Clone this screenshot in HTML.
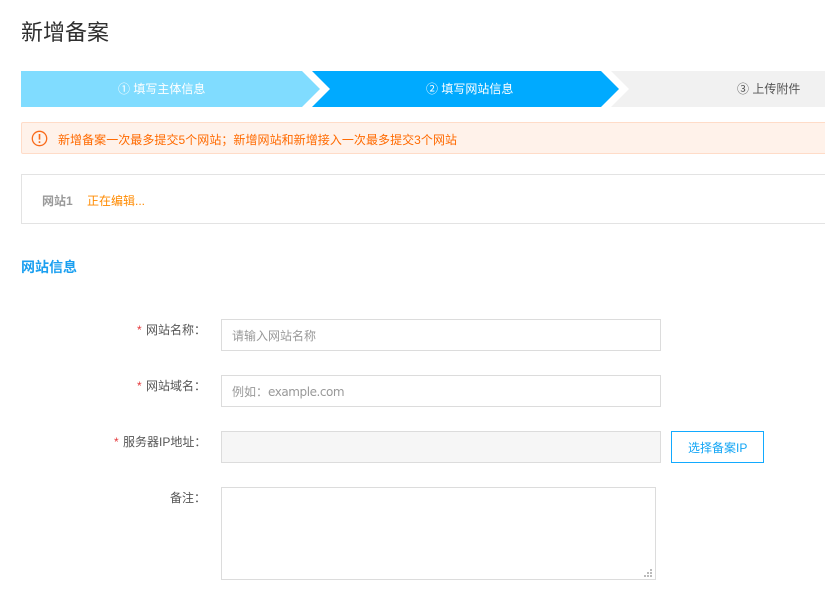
<!DOCTYPE html>
<html lang="zh"><head><meta charset="utf-8"><style>
html,body{margin:0;padding:0;background:#fff}
body{width:825px;height:601px;position:relative;overflow:hidden;font-family:"Liberation Sans","Noto Sans CJK SC",sans-serif;font-size:12px;color:#555}
.a{position:absolute;white-space:nowrap;line-height:18px}
.b{position:absolute;box-sizing:border-box;border:1px solid #dcdcdc}
.r{color:#e4393c;margin-right:1px}
</style></head><body>
<div class="a" style="left:21px;top:17px;font-size:22px;line-height:32px;color:#2f2f2f">新增备案</div>
<svg class="a" style="left:0;top:0" width="825" height="120">
<polygon points="21,71 302,71 320,89 302,107 21,107" fill="#80dcff"/>
<polygon points="312,71 601,71 619,89 601,107 312,107 330,89" fill="#00aaff"/>
<polygon points="611,71 825,71 825,107 611,107 629,89" fill="#f1f1f1"/>
</svg>
<div class="a" style="left:118px;top:80px;color:#fff">① 填写主体信息</div>
<div class="a" style="left:426px;top:80px;color:#fff">② 填写网站信息</div>
<div class="a" style="left:737px;top:80px;color:#555">③ 上传附件</div>
<div class="b" style="left:21px;top:122px;width:830px;height:32px;background:#fff2ea;border-color:#ffdcc8;border-radius:2px"></div>
<svg class="a" style="left:31px;top:130px" width="17" height="17" viewBox="0 0 17 17"><circle cx="8.5" cy="8.5" r="7.2" fill="none" stroke="#f96a1a" stroke-width="1.3"/><path d="M8.5 4v5.6M8.5 11.2v1.8" stroke="#f96a1a" stroke-width="1.6" fill="none"/></svg>
<div class="a" style="left:58px;top:131px;color:#ff6a00;letter-spacing:.05px">新增备案一次最多提交5个网站；新增网站和新增接入一次最多提交3个网站</div>
<div class="b" style="left:21px;top:174px;width:830px;height:50px;border-color:#e3e3e3"></div>
<div class="a" style="left:42px;top:192px;color:#999;font-weight:bold">网站1</div>
<div class="a" style="left:87px;top:192px;color:#ff8a00">正在编辑...</div>
<div class="a" style="left:21px;top:258px;color:#1a9ff0;font-size:14px;font-weight:bold">网站信息</div>
<div class="a" style="left:137px;top:321px"><span class="r">*</span> 网站名称：</div>
<div class="b" style="left:221px;top:319px;width:440px;height:32px"></div>
<div class="a" style="left:232px;top:327px;color:#999">请输入网站名称</div>
<div class="a" style="left:137px;top:377px"><span class="r">*</span> 网站域名：</div>
<div class="b" style="left:221px;top:375px;width:440px;height:32px"></div>
<div class="a" style="left:232px;top:383px;color:#999">例如：<span style="font-family:'DejaVu Sans',sans-serif;letter-spacing:-.45px">example.com</span></div>
<div class="a" style="left:114px;top:433px"><span class="r">*</span> 服务器IP地址：</div>
<div class="b" style="left:221px;top:431px;width:440px;height:32px;background:#f6f6f6"></div>
<div class="b" style="left:671px;top:431px;width:93px;height:32px;border-color:#12aaff"></div>
<div class="a" style="left:688px;top:439px;color:#12a5f5">选择备案IP</div>
<div class="a" style="left:170px;top:489px">备注：</div>
<div class="b" style="left:221px;top:487px;width:435px;height:93px"></div>
<svg class="a" style="left:643px;top:568px" width="10" height="10"><path d="M1 7h2v2H1zM4 7h2v2H4zM7 7h2v2H7zM4 4h2v2H4zM7 4h2v2H7zM7 1h2v2H7z" fill="#bbb"/></svg>
</body></html>
